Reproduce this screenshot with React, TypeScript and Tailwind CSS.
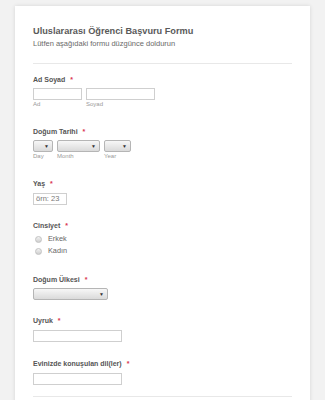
import React from 'react';

const font = { fontFamily: '"Liberation Sans", Arial, sans-serif' };

function Label({ text }: { text: string }) {
  return (
    <div className="text-[7px] font-bold text-[#555] leading-[8px] h-[8px] whitespace-nowrap">
      {text}
      <span className="text-[#d9364f] ml-[5px]">*</span>
    </div>
  );
}

function Sub({ text }: { text: string }) {
  return <div className="text-[6px] text-[#999] leading-[6px] mt-[1px]">{text}</div>;
}

function Select({ w }: { w: string }) {
  return (
    <div className={`${w} h-[12px] border border-[#b5b5b5] rounded-[2px] bg-gradient-to-b from-[#f7f7f7] to-[#dadada] flex items-center justify-end pr-[3px]`}>
      <span className="text-[5px] text-[#333] leading-none">▼</span>
    </div>
  );
}

function Input({ w, children }: { w: string; children?: React.ReactNode }) {
  return (
    <div className={`${w} h-[12px] border border-[#cfcfcf] flex items-center pl-[2px]`}>
      {children}
    </div>
  );
}

export default function App() {
  return (
    <div className="h-[400px] overflow-hidden bg-[#f2f2f2] pl-[15px] pt-[6px]" style={font}>
      <div className="w-[295px] h-[400px] bg-white shadow-[0_0_4px_rgba(0,0,0,0.12)] px-[18px] pt-[19px]">
        {/* Header */}
        <h1
          className="text-[9.2px] font-bold text-[#5a5a5a] leading-[12px] h-[12px]"
          style={{ fontFamily: '"Liberation Sans Narrow", "Liberation Sans", Arial, sans-serif' }}
        >
          Uluslararası Öğrenci Başvuru Formu
        </h1>
        <p className="text-[7.5px] text-[#6a6a6a] mt-[2px] leading-[10px] h-[10px]">
          Lütfen aşağıdaki formu düzgünce doldurun
        </p>
        <div className="border-t border-[#e8e8e8] mt-[14px]" />

        {/* Ad Soyad */}
        <div className="mt-[12px]">
          <Label text="Ad Soyad" />
          <div className="flex gap-[4px] mt-[4px]">
            <div>
              <Input w="w-[49px]" />
              <Sub text="Ad" />
            </div>
            <div>
              <Input w="w-[69px]" />
              <Sub text="Soyad" />
            </div>
          </div>
        </div>

        {/* Doğum Tarihi */}
        <div className="mt-[21px]">
          <Label text="Doğum Tarihi" />
          <div className="flex gap-[4px] mt-[4px]">
            <div>
              <Select w="w-[20px]" />
              <Sub text="Day" />
            </div>
            <div>
              <Select w="w-[43px]" />
              <Sub text="Month" />
            </div>
            <div>
              <Select w="w-[27px]" />
              <Sub text="Year" />
            </div>
          </div>
        </div>

        {/* Yaş */}
        <div className="mt-[21px]">
          <Label text="Yaş" />
          <div className="mt-[5px]">
            <Input w="w-[34px]">
              <span className="text-[7.5px] text-[#777] leading-none">örn: 23</span>
            </Input>
          </div>
        </div>

        {/* Cinsiyet */}
        <div className="mt-[17px]">
          <Label text="Cinsiyet" />
          <div className="mt-[3px] flex flex-col pl-[2px]">
            {['Erkek', 'Kadın'].map((o) => (
              <div key={o} className="flex items-center gap-[6px] h-[12px]">
                <span className="w-[7px] h-[7px] rounded-full border border-[#c2c2c2] bg-gradient-to-b from-[#f2f2f2] to-[#cfcfcf]" />
                <span className="text-[7.3px] text-[#666] leading-none">{o}</span>
              </div>
            ))}
          </div>
        </div>

        {/* Doğum Ülkesi */}
        <div className="mt-[19px]">
          <Label text="Doğum Ülkesi" />
          <div className="mt-[4px]">
            <Select w="w-[75px]" />
          </div>
        </div>

        {/* Uyruk */}
        <div className="mt-[17px]">
          <Label text="Uyruk" />
          <div className="mt-[5px]">
            <Input w="w-[89px]" />
          </div>
        </div>

        {/* Evinizde konuşulan dil(ler) */}
        <div className="mt-[18px]">
          <Label text="Evinizde konuşulan dil(ler)" />
          <div className="mt-[5px]">
            <Input w="w-[89px]" />
          </div>
        </div>

        <div className="border-t border-[#e8e8e8] mt-[11px]" />
      </div>
    </div>
  );
}
